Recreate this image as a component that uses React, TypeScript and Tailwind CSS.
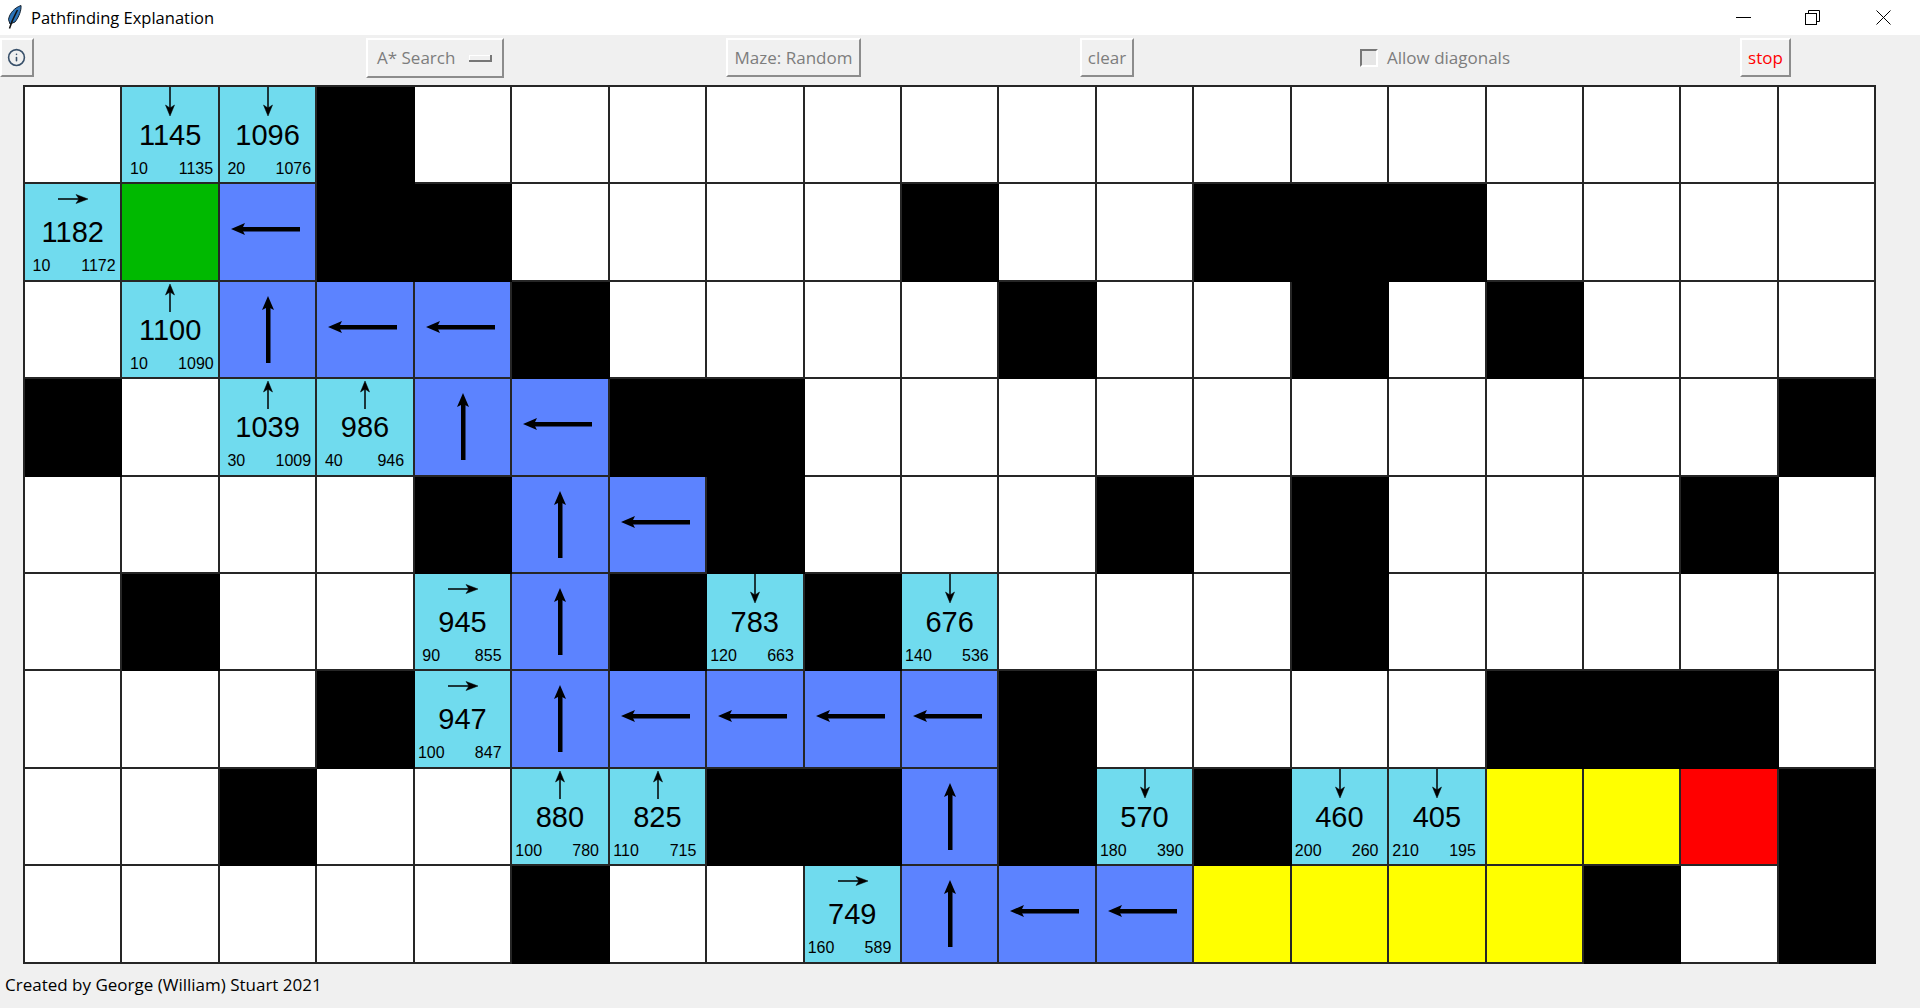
import { Info } from 'lucide-react';

type Dir = 'up' | 'down' | 'left' | 'right';
type Cell = string | [Dir, number, number, number];

const rows: Cell[][] = [
  ['', ['down', 1145, 10, 1135], ['down', 1096, 20, 1076], 'k', '', '', '', '', '', '', '', '', '', '', '', '', '', '', ''],
  [['right', 1182, 10, 1172], 'g', 'L', 'k', 'k', '', '', '', '', 'k', '', '', 'k', 'k', 'k', '', '', '', ''],
  ['', ['up', 1100, 10, 1090], 'U', 'L', 'L', 'k', '', '', '', '', 'k', '', '', 'k', '', 'k', '', '', ''],
  ['k', '', ['up', 1039, 30, 1009], ['up', 986, 40, 946], 'U', 'L', 'k', 'k', '', '', '', '', '', '', '', '', '', '', 'k'],
  ['', '', '', '', 'k', 'U', 'L', 'k', '', '', '', 'k', '', 'k', '', '', '', 'k', ''],
  ['', 'k', '', '', ['right', 945, 90, 855], 'U', 'k', ['down', 783, 120, 663], 'k', ['down', 676, 140, 536], '', '', '', 'k', '', '', '', '', ''],
  ['', '', '', 'k', ['right', 947, 100, 847], 'U', 'L', 'L', 'L', 'L', 'k', '', '', '', '', 'k', 'k', 'k', ''],
  ['', '', 'k', '', '', ['up', 880, 100, 780], ['up', 825, 110, 715], 'k', 'k', 'U', 'k', ['down', 570, 180, 390], 'k', ['down', 460, 200, 260], ['down', 405, 210, 195], 'y', 'y', 'r', 'k'],
  ['', '', '', '', '', 'k', '', '', ['right', 749, 160, 589], 'U', 'L', 'L', 'y', 'y', 'y', 'y', 'k', '', 'k'],
];

const cellClass = 'h-[97.4px] overflow-hidden border-r-2 border-b-2';
const raised =
  'flex items-center justify-center border-2 border-t-white border-l-white border-r-[#8c8c8c] border-b-[#8c8c8c] bg-[#f0f0f0]';

function SmallArrow({ dir }: { dir: Dir }) {
  return (
    <svg width="96" height="30" className="block" fill="#000" stroke="#000">
      {dir === 'down' && (
        <>
          <path d="M48 0V24" strokeWidth="1.5" />
          <path d="M43.5 18L48 21L52.5 18L48 29Z" strokeWidth="0.5" />
        </>
      )}
      {dir === 'up' && (
        <>
          <path d="M48 8V30" strokeWidth="1.5" />
          <path d="M43.5 13L48 10L52.5 13L48 2Z" strokeWidth="0.5" />
        </>
      )}
      {dir === 'right' && (
        <>
          <path d="M33 15H57" strokeWidth="1.5" />
          <path d="M51 10.5L54 15L51 19.5L63 15Z" strokeWidth="0.5" />
        </>
      )}
    </svg>
  );
}

function PathArrow({ dir }: { dir: 'L' | 'U' }) {
  return (
    <svg width="96" height="96" className="block" fill="#000" stroke="none">
      {dir === 'L' ? (
        <>
          <rect x="21" y="43" width="59" height="4.5" />
          <path d="M11 45L25 39L22 45L25 51Z" />
        </>
      ) : (
        <>
          <rect x="46" y="25" width="4.5" height="56" />
          <path d="M48 14L42 28L48 25L54 28Z" />
        </>
      )}
    </svg>
  );
}

function GridCell({ cell }: { cell: Cell }) {
  if (Array.isArray(cell)) {
    const [dir, f, g, h] = cell;
    return (
      <div className={`${cellClass} border-[#262626] bg-[#70dbee] text-black`}>
        <SmallArrow dir={dir} />
        <div className="flex h-[37px] items-center justify-center text-[29px] leading-none">{f}</div>
        <div className="flex h-[30px] items-center justify-between text-[16px] leading-none">
          <span className="w-[33px] text-center">{g}</span>
          <span className="w-[44px] text-center">{h}</span>
        </div>
      </div>
    );
  }
  if (cell === 'L' || cell === 'U') {
    return (
      <div className={`${cellClass} border-[#262626] bg-[#5c83ff]`}>
        <PathArrow dir={cell} />
      </div>
    );
  }
  const bg =
    cell === 'k'
      ? 'border-black bg-black'
      : cell === 'g'
        ? 'border-[#262626] bg-[#00b900]'
        : cell === 'y'
          ? 'border-[#262626] bg-[#ffff00]'
          : cell === 'r'
            ? 'border-[#262626] bg-[#ff0000]'
            : 'border-[#262626] bg-white';
  return <div className={`${cellClass} ${bg}`} />;
}

export default function App() {
  return (
    <div className="flex h-screen w-full flex-col overflow-hidden bg-[#f0f0f0] font-['Open_Sans',sans-serif] text-[17px]">
      {/* title bar */}
      <div className="flex h-[35px] shrink-0 items-center bg-white pl-[7px]">
        <svg width="16" height="24" viewBox="0 0 16 24" className="mb-[2px]">
          <path
            d="M14 0.5C8 2.5 2.5 8 1.5 14.5L3 19L8 17C12 12 14.5 5 14 0.5Z"
            fill="#2b73b8"
            stroke="#14202c"
            strokeWidth="1"
          />
          <path d="M10.5 5C8 10 5 15 2.5 23.5" fill="none" stroke="#111" strokeWidth="1.5" />
        </svg>
        <span className="ml-[8px] mt-[2px] text-[16.5px] text-black">Pathfinding Explanation</span>
        <div className="ml-auto flex items-center">
          <svg width="15" height="15" className="mr-[54px]" stroke="#000" fill="none">
            <path d="M0 7.5H15" />
          </svg>
          <svg width="15" height="15" className="mr-[56px]" stroke="#000" fill="none">
            <rect x="0.5" y="3.5" width="11" height="11" />
            <path d="M3.5 3.5V0.5H14.5V11.5H11.5" />
          </svg>
          <svg width="15" height="15" className="mr-[29px]" stroke="#000" fill="none">
            <path d="M0.5 0.5L14.5 14.5M14.5 0.5L0.5 14.5" />
          </svg>
        </div>
      </div>

      {/* toolbar */}
      <div className="flex h-[50px] shrink-0 items-start pt-[3px] text-[#7d7d7d]">
        <button className={`${raised} h-[39px] w-[34px]`}>
          <Info size={19} strokeWidth={2} color="#38506a" className="mr-[2px]" />
        </button>
        <button className={`${raised} ml-[332px] h-[40px] w-[138px] justify-start pl-[9px]`}>
          A* Search
          <span className="ml-auto mr-[10px] h-[7px] w-[23px] border-b-2 border-r-2 border-[#777] bg-[#f0f0f0] shadow-[inset_1px_1px_0_#fff]" />
        </button>
        <button className={`${raised} ml-[222px] h-[39px] w-[135px]`}>Maze: Random</button>
        <button className={`${raised} ml-[219px] h-[39px] w-[54px]`}>clear</button>
        <label className="ml-[226px] flex h-[40px] w-[153px] items-center gap-[9px] whitespace-nowrap">
          <span className="h-[18px] w-[18px] shrink-0 border-2 border-t-[#777] border-l-[#777] border-r-white border-b-white bg-[#e6e6e6]" />
          Allow diagonals
        </label>
        <button className={`${raised} ml-[227px] h-[39px] w-[51px] text-[#ff0000]`}>stop</button>
      </div>

      {/* maze canvas */}
      <div className="ml-[23px] w-fit border-l-2 border-t-2 border-[#262626] font-['Liberation_Sans',sans-serif]">
        <div className="grid grid-cols-[repeat(19,97.45px)]">
          {rows.flatMap((row, y) => row.map((cell, x) => <GridCell key={`${y}-${x}`} cell={cell} />))}
        </div>
      </div>

      <div className="flex flex-1 items-center pb-[2px] pl-[5px] text-black">Created by George (William) Stuart 2021</div>
    </div>
  );
}
